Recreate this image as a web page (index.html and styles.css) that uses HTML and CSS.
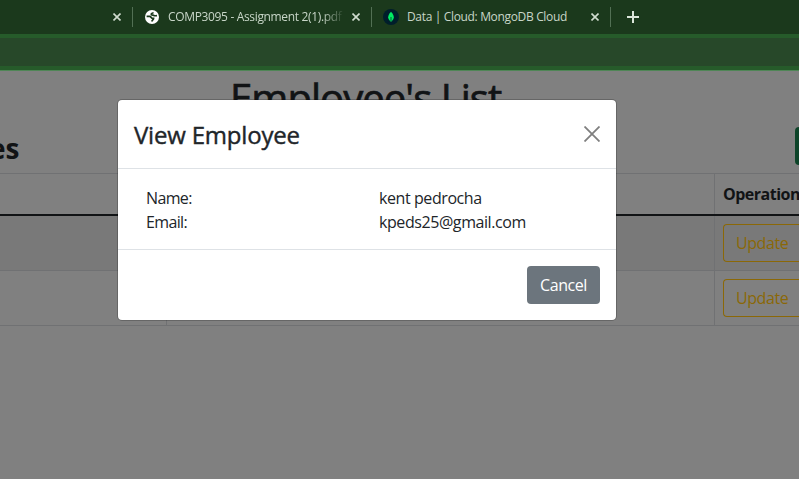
FILE: index.html
```html
<!DOCTYPE html>
<html lang="en">
<head>
<meta charset="utf-8">
<title>Employee's List</title>
<link rel="stylesheet" href="styles.css">
</head>
<body>
<header class="tabs">
  <div class="tab tab-first">
    <svg class="x" viewBox="0 0 8 8"><path d="M.5.5l7 7M7.5.5l-7 7"/></svg>
  </div>
  <div class="tab tab-pdf">
    <svg class="globe" viewBox="0 0 14 14"><circle cx="7" cy="7" r="7" fill="#fff"/><path d="M1.600 6.300h3c1.600 0 1.200 2 2.800 2h1.200c0 1.600-1.400 1.400-1.800 3.200M8.200 2.400c-.2 1.200-2 .6-2 1.800s1.600.8 2.600 1.200c.8.400 2 .4 3.200.2" fill="none" stroke="#1b391c" stroke-width="1.700"/></svg>
    <span class="tab-title fade">COMP3095 - Assignment 2(1).pdf</span>
    <svg class="x" viewBox="0 0 8 8"><path d="M.5.5l7 7M7.5.5l-7 7"/></svg>
  </div>
  <div class="tab tab-cloud">
    <svg class="leaf" viewBox="0 0 16 16"><circle cx="8" cy="8" r="8" fill="#001e2b"/><path d="M8 2.800C6 5 5.200 6.500 5.200 8.200c0 2 1.200 3.200 2.800 4.600 1.600-1.400 2.800-2.600 2.800-4.600C10.800 6.500 10 5 8 2.800z" fill="#00ed64"/><path d="M8 8v5" stroke="#08733f" stroke-width="1.200"/></svg>
    <span class="tab-title">Data | Cloud: MongoDB Cloud</span>
    <svg class="x" viewBox="0 0 8 8"><path d="M.5.5l7 7M7.5.5l-7 7"/></svg>
  </div>
  <svg class="plus" viewBox="0 0 12 12"><path d="M6 0v12M0 6h12"/></svg>
</header>
<div class="toolbar"></div>
<main class="page">
  <h1>Employee's List</h1>
  <div class="subhead"><h2>es</h2><div class="add"></div></div>
  <div class="table">
    <div class="row head"><div class="cell"></div><div class="cell"></div><div class="cell ops">Operation</div></div>
    <div class="row striped"><div class="cell"></div><div class="cell"></div><div class="cell"><button class="update">Update</button></div></div>
    <div class="row"><div class="cell"></div><div class="cell"></div><div class="cell"><button class="update">Update</button></div></div>
  </div>
</main>
<section class="modal">
  <div class="modal-header">
    <h5>View Employee</h5>
    <svg class="close" viewBox="0 0 16 16"><path d="M.5.5l15 15M15.500.5l-15 15"/></svg>
  </div>
  <div class="modal-body">
    <div class="label">Name:</div><div>kent pedrocha</div>
    <div class="label">Email:</div><div>kpeds25@gmail.com</div>
  </div>
  <div class="modal-footer"><button class="cancel">Cancel</button></div>
</section>
</body>
</html>
```
FILE: styles.css
```css
* { box-sizing: border-box; }
body {
  margin: 0;
  width: 799px;
  height: 479px;
  overflow: hidden;
  position: relative;
  background: #808080;
  color: #111315;
  font: 16px/24px "Open Sans", "Noto Sans", sans-serif;
  letter-spacing: -.42px;
}
h1, h2, h5 { margin: 0; }
button { font: inherit; letter-spacing: inherit; display: block; white-space: nowrap; }
svg { display: block; flex: none; }

.tabs {
  display: flex;
  height: 34px;
  background: #1b391c;
}
.tab {
  display: flex;
  align-items: center;
  height: 20px;
  margin-top: 7px;
  border-right: 1px solid #527054;
}
.tab-first { width: 133px; padding-left: 113px; }
.tab-pdf { width: 239px; padding-left: 12px; }
.tab-cloud { width: 239px; padding-left: 11px; }
.x { width: 8px; height: 8px; fill: none; stroke: #d0dccf; stroke-width: 1.6; }
.tab-pdf .x { margin-left: 9px; }
.globe { width: 14px; height: 14px; margin-right: 9px; }
.leaf { width: 16px; height: 16px; margin-right: 8px; }
.tab-title {
  width: 175px;
  overflow: hidden;
  white-space: nowrap;
  color: #c8d6c8;
  font-size: 12px;
  line-height: 20px;
  letter-spacing: -.34px;
}
.tab-cloud .tab-title { width: 184px; }
.fade { mask-image: linear-gradient(to right, #000 88%, transparent 101%); }
.plus { width: 12px; height: 12px; margin: 11px 0 0 16px; fill: none; stroke: #dbe6da; stroke-width: 2; }

.toolbar {
  height: 37px;
  border-top: 4px solid #265b2a;
  background: #274829;
  box-shadow: inset 0 -1px #4f8656, inset 0 -5px #265b2a;
}

.page { width: 799px; overflow: hidden; }
h1 {
  height: 52px;
  padding-left: 230px;
  font-size: 40px;
  font-weight: 500;
  line-height: 54px;
  letter-spacing: -.94px;
  white-space: nowrap;
  -webkit-text-stroke: .7px;
}
.subhead { display: flex; justify-content: space-between; height: 50px; }
h2 { margin-left: -11px; font-size: 28px; line-height: 50px; letter-spacing: 0; }
.add { width: 4px; height: 38px; margin-top: 4px; border-radius: 4px 0 0 4px; background: #0d4429; }
.row {
  display: grid;
  grid-template-columns: 167px 548px 84px;
  height: 55px;
  border-bottom: 1px solid #707173;
}
.head { height: 43px; border-top: 1px solid #707173; border-bottom: 2px solid #111315; }
.striped { background: #797979; }
.cell { padding: 8px 0 8px 8px; border-right: 1px solid #707173; }
.cell:last-child { border-right: 0; }
.ops { font-weight: 700; letter-spacing: -.5px; }
.update {
  width: 76px;
  height: 38px;
  padding: 0 12px;
  border: 1px solid #8b6807;
  border-right: 0;
  border-radius: 4px 0 0 4px;
  background: none;
  color: #8b6807;
  text-align: left;
}

.modal {
  position: absolute;
  left: 117px;
  top: 99px;
  width: 500px;
  height: 222px;
  border: 1px solid rgba(0, 0, 0, .2);
  border-radius: 5px;
  background: #fff;
  background-clip: padding-box;
  color: #212529;
}
.modal-header {
  display: flex;
  align-items: flex-start;
  justify-content: space-between;
  height: 69px;
  padding: 17px 16px 0;
  border-bottom: 1px solid #dee2e6;
}
h5 { font-size: 24px; font-weight: 500; line-height: 36px; letter-spacing: -.2px; -webkit-text-stroke: .4px; }
.close { width: 16px; height: 16px; margin-top: 9px; fill: none; stroke: #7f7f7f; stroke-width: 1.8; }
.modal-body {
  display: grid;
  grid-template-columns: 233px 1fr;
  height: 80px;
  padding: 17px 16px 15px 28px;
}
.label { letter-spacing: -.65px; }
.modal-footer {
  display: flex;
  justify-content: flex-end;
  padding: 16px;
  border-top: 1px solid #dee2e6;
}
.cancel {
  width: 73px;
  height: 38px;
  padding: 0;
  border: 0;
  border-radius: 4px;
  background: #6c757d;
  color: #fff;
}
```
